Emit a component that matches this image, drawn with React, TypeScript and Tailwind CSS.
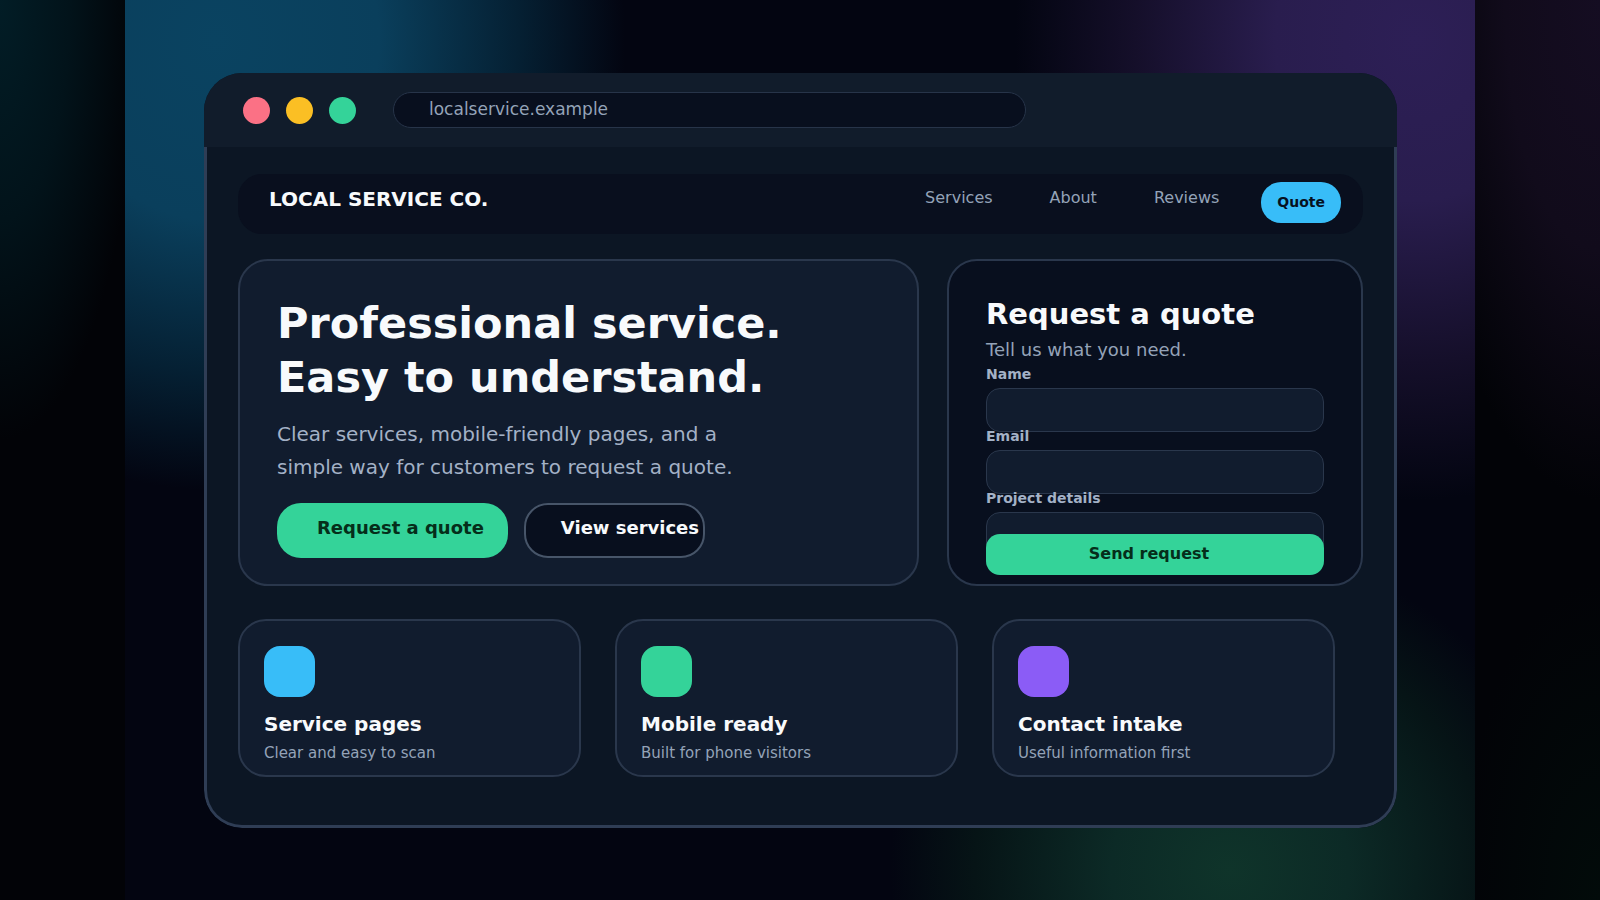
import type { ReactNode } from "react"

const navLinks = ["Services", "About", "Reviews"]

const features = [
  { title: "Service pages", text: "Clear and easy to scan", color: "bg-[#38bdf8]" },
  { title: "Mobile ready", text: "Built for phone visitors", color: "bg-[#34d399]" },
  { title: "Contact intake", text: "Useful information first", color: "bg-[#8b5cf6]" },
]

function TitleBar() {
  return (
    <div className="flex h-[74px] items-center bg-[#111c2b] pr-6 pl-[39px]">
      <div className="flex gap-4">
        <span className="size-[27px] rounded-full bg-[#fb7185]" />
        <span className="size-[27px] rounded-full bg-[#fbbf24]" />
        <span className="size-[27px] rounded-full bg-[#34d399]" />
      </div>
      <div className="ml-[37px] h-9 w-[56%] rounded-full border border-[#273449] bg-[#080f1e] px-[35px] text-[17px] leading-8 text-[#94a3b8]">
        localservice.example
      </div>
    </div>
  )
}

function NavBar() {
  return (
    <header className="flex h-[60px] items-start justify-between rounded-3xl bg-[#090f1e] pt-2 pr-[22px] pl-[31px]">
      <span className="text-xl leading-[34px] font-bold text-[#f8fafc]">LOCAL SERVICE CO.</span>
      <nav className="flex items-start">
        {navLinks.map((link) => (
          <a
            key={link}
            href="#"
            className="mr-[57px] text-base leading-8 text-[#94a3b8] last-of-type:mr-[42px]"
          >
            {link}
          </a>
        ))}
        <button className="h-[41px] rounded-[20px] bg-[#38bdf8] px-4 pb-[2px] text-[14px] leading-5 font-bold text-[#06111f]">
          Quote
        </button>
      </nav>
    </header>
  )
}

function Hero() {
  return (
    <section className="rounded-[30px] border-2 border-[#2a374c] bg-[#111c2e] px-[37px] pt-[35px]">
      <h1 className="text-[43px] leading-[54px] font-bold text-[#f8fafc]">
        Professional service.
        <br />
        Easy to understand.
      </h1>
      <p className="mt-[14px] text-[20px] leading-[33px] text-[#a3b1c6]">
        Clear services, mobile-friendly pages, and a
        <br />
        simple way for customers to request a quote.
      </p>
      <div className="mt-[19px] flex gap-4">
        <button className="h-[55px] rounded-3xl bg-[#34d399] pr-6 pb-[6px] pl-10 text-lg font-bold text-[#052e1a]">
          Request a quote
        </button>
        <button className="h-[55px] rounded-3xl border-2 border-[#475569] bg-[#080f1e] pr-1 pb-[6px] pl-[35px] text-lg font-bold text-[#f8fafc]">
          View services
        </button>
      </div>
    </section>
  )
}

function Field({ id, label, children }: { id: string; label: string; children: ReactNode }) {
  return (
    <div className="-mt-[5px]">
      <label htmlFor={id} className="mb-[5px] block text-[14px] leading-[18px] font-bold text-[#a3b1c6]">
        {label}
      </label>
      {children}
    </div>
  )
}

function QuoteForm() {
  const inputClass =
    "block h-11 w-full resize-none rounded-[14px] border border-[#2a374c] bg-[#111c2e] px-3 text-sm text-[#f8fafc] outline-none"

  return (
    <section className="rounded-[30px] border-2 border-[#2a374c] bg-[#080f1e] px-[37px] pt-[33px] pb-[9px]">
      <h2 className="text-[29px] leading-10 font-bold text-[#f8fafc]">Request a quote</h2>
      <p className="pb-1 text-lg leading-8 text-[#94a3b8]">Tell us what you need.</p>
      <form onSubmit={(e) => e.preventDefault()}>
        <Field id="name" label="Name">
          <input id="name" type="text" className={inputClass} />
        </Field>
        <Field id="email" label="Email">
          <input id="email" type="email" className={inputClass} />
        </Field>
        <Field id="details" label="Project details">
          <textarea id="details" className={inputClass} />
        </Field>
        <button
          type="submit"
          className="relative -mt-[22px] block h-[41px] w-full rounded-[14px] bg-[#34d399] pr-3 pb-[2px] text-base font-bold text-[#052e1a]"
        >
          Send request
        </button>
      </form>
    </section>
  )
}

export default function App() {
  return (
    <div className="flex min-h-screen bg-[#020307] bg-[radial-gradient(ellipse_140px_440px_at_0_0,#021d26,#02131a_50%,transparent),radial-gradient(ellipse_190px_500px_at_100%_0,#150d22,#110b1b_50%,transparent),radial-gradient(ellipse_140px_320px_at_100%_100%,#020b0a,transparent)] font-['DejaVu_Sans',sans-serif]">
      <div className="mx-[125px] flex flex-1 flex-col bg-[#030511] bg-[radial-gradient(ellipse_410px_450px_at_90px_40px,#0a4361_0%,#0a3f5c_40%,#052033_74%,transparent_100%),radial-gradient(ellipse_400px_460px_at_1290px_40px,#2d1f56_0%,#291d4e_35%,#150f2a_70%,transparent_100%),radial-gradient(ellipse_340px_320px_at_1105px_870px,#0f342a_0%,#0c2a26_35%,#061416_75%,transparent_100%)] pt-[73px] pr-[78px] pb-[73px] pl-[79px]">
        <main className="flex-1 overflow-hidden rounded-[38px] bg-[#0c1624]">
          <TitleBar />
          <div className="rounded-b-[38px] border-x-[3px] border-b-[3px] border-[#2f3d55] px-[31px] pt-[27px] pb-12">
            <NavBar />
            <div className="mt-[25px] grid grid-cols-[681fr_416fr] gap-7">
              <Hero />
              <QuoteForm />
            </div>
            <div className="mt-[33px] grid grid-cols-3 gap-[34px] pr-7">
              {features.map((feature) => (
                <article
                  key={feature.title}
                  className="rounded-[28px] border-2 border-[#2a374c] bg-[#111c2e] px-6 pt-[25px] pb-[9px]"
                >
                  <div className={`size-[51px] rounded-2xl ${feature.color}`} />
                  <h3 className="mt-[11px] text-xl leading-8 font-bold text-[#f8fafc]">{feature.title}</h3>
                  <p className="text-[15px] leading-[26px] text-[#94a3b8]">{feature.text}</p>
                </article>
              ))}
            </div>
          </div>
        </main>
      </div>
    </div>
  )
}
